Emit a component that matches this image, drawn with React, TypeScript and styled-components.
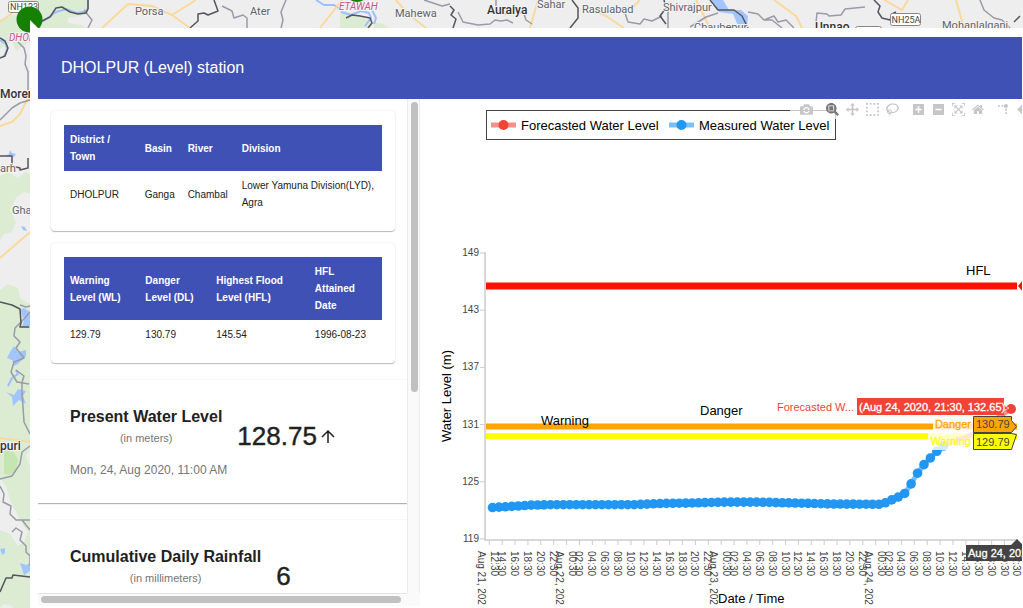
import React from "react";
import styled, { createGlobalStyle } from "styled-components";

const GlobalStyle = createGlobalStyle`
  *, *::before, *::after { box-sizing: border-box; }
  body {
    margin: 0;
    font-family: "Helvetica Neue", "Liberation Sans", Arial, sans-serif;
    color: #212121;
    background: #eeeeee;
  }
`;

const Page = styled.div`
  position: relative;
  height: 100vh;
  display: flex;
  padding: 28px 0 0 30px;
  overflow: hidden;
`;

const MapLayer = styled.svg`
  position: absolute;
  top: 0;
  left: 0;
  width: 100%;
  height: 100%;
  font-family: Roboto, sans-serif;
`;

const Dialog = styled.section`
  position: relative;
  flex: 1;
  min-width: 0;
  display: flex;
  flex-direction: column;
  padding: 9px 1px 2px 8px;
  background: #ffffff;
`;

const Header = styled.header`
  display: flex;
  align-items: center;
  height: 62px;
  flex: none;
  padding: 0 23px;
  background: #3f51b5;
`;

const HeaderTitle = styled.h1`
  margin: 0;
  font-size: 16px;
  font-weight: 400;
  line-height: 24px;
  color: #ffffff;
`;

const Body = styled.div`
  flex: 1;
  min-height: 0;
  display: grid;
  grid-template-columns: minmax(382px, 38%) minmax(0, 1fr);
`;

const SidePanel = styled.div`
  display: grid;
  min-height: 0;
  grid-template-columns: minmax(0, 1fr) 13px;
  grid-template-rows: minmax(0, 1fr) 13px;
  background: #fafafa;
`;

const PanelContent = styled.div`
  overflow: hidden;
  background: #ffffff;
`;

const VerticalTrack = styled.div`
  padding: 3px 2px 0 3px;
  border-left: 1px solid #ececec;
  border-right: 1px solid #ececec;
`;

const HorizontalTrack = styled.div`
  padding: 2px 6px 0 3px;
  border-top: 1px solid #e2e2e2;
`;

const Thumb = styled.div<{ $vertical?: boolean }>`
  width: ${(p) => (p.$vertical ? "7px" : "100%")};
  height: ${(p) => (p.$vertical ? "59%" : "7px")};
  border-radius: 4px;
  background: #c1c1c1;
`;

const Card = styled.div`
  margin: 12px 12px 0 13px;
  padding: 14px 13px;
  border-radius: 4px;
  background: #ffffff;
  box-shadow: 0 1px 1px rgba(0, 0, 0, 0.26), 0 0 2px rgba(0, 0, 0, 0.1);
`;

const DataTable = styled.table`
  width: 100%;
  table-layout: fixed;
  border-collapse: collapse;
  font-size: 10px;
  line-height: 17px;
  text-align: left;
`;

const HeadCell = styled.th`
  padding: 6px;
  background: #3f51b5;
  color: #ffffff;
  font-weight: 700;
`;

const Cell = styled.td`
  padding: 6px;
`;

const StatCard = styled.section`
  margin-top: 16px;
  padding: 27px 32px 25px;
  background: #ffffff;
  border-top: 1px solid #f6f6f6;
  box-shadow: 0 1px 1px rgba(0, 0, 0, 0.3);
`;

const StatRow = styled.div`
  display: flex;
  align-items: flex-end;
  gap: 15px;
`;

const StatHeading = styled.div`
  text-align: center;
`;

const StatTitle = styled.h2`
  margin: 0 0 3px;
  font-size: 16px;
  line-height: 20px;
  font-weight: 700;
`;

const StatUnit = styled.div`
  font-size: 11px;
  line-height: 16px;
  color: #757575;
`;

const StatValue = styled.div`
  display: flex;
  align-items: center;
  gap: 4px;
  font-size: 26px;
  line-height: 20px;
  -webkit-text-stroke: 0.4px #212121;
`;

const StatTime = styled.div`
  margin-top: 16px;
  font-size: 12px;
  line-height: 16px;
  color: #757575;
`;

const ChartArea = styled.div`
  position: relative;
  min-width: 0;
  overflow: hidden;
`;

const ChartSvg = styled.svg`
  display: block;
  width: 100%;
  height: 506px;
  overflow: hidden;
`;

const ModeBar = styled.div`
  position: absolute;
  top: 1px;
  left: 370px;
  display: flex;
  gap: 6px;
  padding: 3px 0 3px 6px;
  background: rgba(255, 255, 255, 0.7);
`;

const ModeGroup = styled.div`
  display: flex;
`;

const ModeButton = styled.button<{ $active?: boolean }>`
  display: flex;
  align-items: center;
  justify-content: center;
  min-width: 20px;
  height: 13px;
  padding: 0 3px;
  border: 0;
  background: none;
  color: ${(p) => (p.$active ? "#777777" : "#c6c6c6")};
`;

type TableData = { columns: { label: string; width: string }[]; row: string[] };

const stationTable: TableData = {
  columns: [
    { label: "District / Town", width: "23.5%" },
    { label: "Basin", width: "13.5%" },
    { label: "River", width: "17%" },
    { label: "Division", width: "46%" },
  ],
  row: ["DHOLPUR", "Ganga", "Chambal", "Lower Yamuna Division(LYD), Agra"],
};

const levelTable: TableData = {
  columns: [
    { label: "Warning Level (WL)", width: "23.7%" },
    { label: "Danger Level (DL)", width: "22.3%" },
    { label: "Highest Flood Level (HFL)", width: "31%" },
    { label: "HFL Attained Date", width: "23%" },
  ],
  row: ["129.79", "130.79", "145.54", "1996-08-23"],
};

function InfoTable({ columns, row }: TableData) {
  return (
    <Card>
      <DataTable>
        <colgroup>
          {columns.map((c) => (
            <col key={c.label} width={c.width} />
          ))}
        </colgroup>
        <thead>
          <tr>
            {columns.map((c) => (
              <HeadCell key={c.label} scope="col">
                {c.label}
              </HeadCell>
            ))}
          </tr>
        </thead>
        <tbody>
          <tr>
            {row.map((v) => (
              <Cell key={v}>{v}</Cell>
            ))}
          </tr>
        </tbody>
      </DataTable>
    </Card>
  );
}

type Icon = { label: string; width: number; d: string; scale?: number; active?: boolean };

const modeGroups: Icon[][] = [
  [
    {
      label: "Download plot",
      width: 1000,
      d: "m500 450c-83 0-150-67-150-150 0-83 67-150 150-150 83 0 150 67 150 150 0 83-67 150-150 150z m400 150h-120c-16 0-34 13-39 29l-31 93c-6 15-23 28-40 28h-340c-16 0-34-13-39-28l-31-94c-6-15-23-28-40-28h-120c-55 0-100-45-100-100v-450c0-55 45-100 100-100h800c55 0 100 45 100 100v450c0 55-45 100-100 100z m-400-550c-138 0-250 112-250 250 0 138 112 250 250 250 138 0 250-112 250-250 0-138-112-250-250-250z m365 380c-19 0-35 16-35 35 0 19 16 35 35 35 19 0 35-16 35-35 0-19-16-35-35-35z",
    },
  ],
  [
    {
      label: "Zoom",
      width: 1000,
      active: true,
      d: "m1000-25l-250 251c40 63 63 138 63 218 0 224-182 406-407 406-224 0-406-182-406-406s183-406 407-406c80 0 155 22 218 62l250-250 125 125z m-812 250l0 438 437 0 0-438-437 0z m62 375l313 0 0-312-313 0 0 312z",
    },
    {
      label: "Pan",
      width: 1000,
      d: "m1000 350l-187 188 0-125-250 0 0 250 125 0-188 187-187-187 125 0 0-250-250 0 0 125-188-188 186-187 0 125 252 0 0-250-125 0 187-188 188 188-125 0 0 250 250 0 0-126 187 188z",
    },
    {
      label: "Box Select",
      width: 1000,
      d: "m0 850l0-143 143 0 0 143-143 0z m286 0l0-143 143 0 0 143-143 0z m285 0l0-143 143 0 0 143-143 0z m286 0l0-143 143 0 0 143-143 0z m-857-286l0-143 143 0 0 143-143 0z m857 0l0-143 143 0 0 143-143 0z m-857-285l0-143 143 0 0 143-143 0z m857 0l0-143 143 0 0 143-143 0z m-857-286l0-143 143 0 0 143-143 0z m286 0l0-143 143 0 0 143-143 0z m285 0l0-143 143 0 0 143-143 0z m286 0l0-143 143 0 0 143-143 0z",
    },
    {
      label: "Lasso Select",
      width: 1031,
      d: "m1018 538c-36 207-290 336-568 286-277-48-473-256-436-463 10-57 36-108 76-151-13-66 11-137 68-183 34-28 75-41 114-42l-55-70 0 0c-2-1-3-2-4-3-10-14-8-34 5-45 14-11 34-8 45 4 1 1 2 3 2 5l0 0 113 140c16 11 31 24 45 40 4 3 6 7 8 11 48-3 100 0 151 9 278 48 473 255 436 462z m-624-379c-80 14-149 48-197 96 42 42 109 47 156 9 33-26 47-66 41-105z m-187-74c-19 16-33 37-39 60 50-32 109-55 174-68-42-25-95-24-135 8z m360 75c-34-7-69-9-102-8 8 62-16 128-68 170-73 59-175 54-244-5-9 20-16 40-20 61-28 159 121 317 333 354s407-60 434-217c28-159-121-318-333-355z",
    },
  ],
  [
    {
      label: "Zoom in",
      width: 875,
      d: "m1 787l0-875 875 0 0 875-875 0z m687-500l-187 0 0-187-125 0 0 187-188 0 0 125 188 0 0 187 125 0 0-187 187 0 0-125z",
    },
    {
      label: "Zoom out",
      width: 875,
      d: "m0 788l0-876 875 0 0 876-875 0z m688-500l-500 0 0 125 500 0 0-125z",
    },
    {
      label: "Autoscale",
      width: 1000,
      d: "m250 850l-187 0-63 0 0-62 0-188 63 0 0 188 187 0 0 62z m688 0l-188 0 0-62 188 0 0-188 62 0 0 188 0 62-62 0z m-875-938l0 188-63 0 0-188 0-62 63 0 187 0 0 62-187 0z m875 188l0-188-188 0 0-62 188 0 62 0 0 62 0 188-62 0z m-125 188l-1 0-93-94-156 156 156 156 92-93 2 0 0 250-250 0 0-2 93-92-156-156-156 156 94 92 0 2-250 0 0-250 0 0 93 93 157-156-157-156-93 94 0 0 0-250 250 0 0 0-94 93 156 157 156-157-93-93 0 0 250 0 0 250z",
    },
    {
      label: "Reset axes",
      width: 929,
      d: "m786 296v-267q0-15-11-26t-25-10h-214v214h-143v-214h-214q-15 0-25 10t-11 26v267q0 1 0 2t0 2l321 264 321-264q1-1 1-4z m124 39l-34-41q-5-5-12-6h-2q-7 0-12 3l-386 322-386-322q-7-4-13-4-7 2-12 7l-35 41q-4 5-3 13t6 12l401 334q18 15 42 15t43-15l136-114v109q0 8 5 13t13 5h107q8 0 13-5t5-13v-227l122-102q5-5 6-12t-4-13z",
    },
  ],
  [
    {
      label: "Toggle Spike Lines",
      width: 1000,
      scale: 1.5,
      d: "M512 409c0-57-46-104-103-104-57 0-104 47-104 104 0 57 47 103 104 103 57 0 103-46 103-103z m-327-39l92 0 0 92-92 0z m-185 0l92 0 0 92-92 0z m370-186l92 0 0 93-92 0z m0-184l92 0 0 92-92 0z",
    },
    {
      label: "Show closest data on hover",
      width: 1500,
      d: "m375 725l0 0-375-375 375-374 0-1 1125 0 0 750-1125 0z",
    },
  ],
];

function ModeIcon({ icon }: { icon: Icon }) {
  const s = icon.scale ?? 1;
  return (
    <svg
      width={Math.round((13 * icon.width) / 1000)}
      height={13}
      viewBox={`0 0 ${icon.width} 1000`}
      aria-hidden="true"
    >
      <path d={icon.d} fill="currentColor" transform={`matrix(${s} 0 0 ${-s} 0 850)`} />
    </svg>
  );
}

/* Plot geometry, relative to the chart area */
const PLOT = { left: 66, right: 597, top: 154, bottom: 440 };
const yOf = (v: number) => PLOT.top + ((149 - v) * (PLOT.bottom - PLOT.top)) / 30;
const hourWidth = 6.44;
const tickX = (k: number) => 69.3 + k * hourWidth * 2;

const profile: [number, number][] = [
  [0, 122.3], [1, 122.34], [3, 122.42], [6, 122.55], [9, 122.6], [22, 122.6],
  [26, 122.72], [31, 122.78], [36, 122.87], [41, 122.87], [47, 122.77],
  [53, 122.67], [60, 122.64], [61, 122.8], [62, 123.1], [63, 123.4],
  [64, 123.78], [65, 124.78], [66, 125.9], [67, 126.8], [68, 127.5],
  [69, 128.2], [70, 128.75],
];

function levelAt(hour: number) {
  const i = Math.max(1, profile.findIndex(([h]) => h >= hour));
  const [h0, v0] = profile[i - 1];
  const [h1, v1] = profile[i];
  return v0 + ((v1 - v0) * (hour - h0)) / (h1 - h0);
}

const measured = Array.from({ length: 71 }, (_, h) => ({ x: 72.5 + h * hourWidth, y: yOf(levelAt(h)) }));
const forecast = [
  { x: 523, y: yOf(128.75) },
  { x: 553, y: yOf(130) },
  { x: 591, y: 310 },
];
const lastForecast = forecast[forecast.length - 1];
const toPoints = (pts: { x: number; y: number }[]) => pts.map((p) => `${p.x},${p.y}`).join(" ");

const dayLabels: Record<number, string> = {
  0: "Aug 21, 2020",
  6: "Aug 22, 2020",
  18: "Aug 23, 2020",
  30: "Aug 24, 2020",
};
const timeLabel = (k: number) => `${String((12 + k * 2) % 24).padStart(2, "0")}:30`;

function LevelChart() {
  return (
    <ChartSvg role="img" aria-label="Water level over time">
      <g stroke="#cccccc" fill="none">
        <path d={`M65 ${PLOT.top - 1}V441H598`} strokeWidth="1.5" />
        {[149, 143, 137, 131, 125, 119].map((v) => (
          <path key={v} d={`M60 ${yOf(v)}h5`} />
        ))}
        {Array.from({ length: 42 }, (_, k) => (
          <path key={k} d={`M${tickX(k)} 441v5`} />
        ))}
      </g>
      <g fontSize="10" fill="#444444">
        {[149, 143, 137, 131, 125, 119].map((v) => (
          <text key={v} x="59" y={yOf(v) + 3} textAnchor="end">
            {v}
          </text>
        ))}
        {Array.from({ length: 42 }, (_, k) => {
          const day = dayLabels[k];
          return (
            <g key={k} transform={`translate(${tickX(k)} 452) rotate(90)`}>
              <text y={day ? -2 : 4}>{timeLabel(k)}</text>
              {day && <text y="11">{day}</text>}
            </g>
          );
        })}
      </g>

      <g strokeWidth="6" fill="none">
        <path d={`M${PLOT.left} ${yOf(145.54)}H${PLOT.right}`} stroke="#ff1100" strokeWidth="7" />
        <path d={`M${PLOT.left} ${yOf(130.79)}H${PLOT.right}`} stroke="#ffa500" />
        <path d={`M${PLOT.left} ${yOf(129.79)}H${PLOT.right}`} stroke="#ffff00" />
      </g>
      <path d="M598 187l6 -7v14z" fill="#ff1100" />

      <polyline points={toPoints(forecast)} fill="none" stroke="#f44336" strokeOpacity="0.6" strokeWidth="5" />
      <polyline points={toPoints(measured)} fill="none" stroke="#2196f3" strokeOpacity="0.6" strokeWidth="5" />
      {measured.map((p) => (
        <circle key={p.x} cx={p.x} cy={p.y} r="4.8" fill="#2196f3" />
      ))}

      <g fontSize="13" fill="#000000">
        <text x="546" y="176">HFL</text>
        <text x="280" y="316">Danger</text>
        <text x="121" y="326">Warning</text>
        <text x="298" y="504">Date / Time</text>
        <text transform="translate(31 297) rotate(-90)" textAnchor="middle">
          Water Level (m)
        </text>
      </g>

      <rect x="66.500" y="11.500" width="349" height="29" fill="#ffffff" stroke="#444444" />
      <g strokeWidth="5">
        <path d="M71 26h25" stroke="#f44336" strokeOpacity="0.6" />
        <circle cx="83.500" cy="26" r="5" fill="#f44336" />
        <path d="M249 26h25" stroke="#2196f3" strokeOpacity="0.6" />
        <circle cx="261.500" cy="26" r="5" fill="#2196f3" />
      </g>
      <g fontSize="13" fill="#000000">
        <text x="101" y="31">Forecasted Water Level</text>
        <text x="279" y="31">Measured Water Level</text>
      </g>

      <g fontSize="11">
        <rect x="513" y="317" width="40" height="17" fill="#ffffff" fillOpacity="0.8" />
        <rect x="508" y="334" width="45" height="17" fill="#ffffff" fillOpacity="0.8" />
        <path d="M437 299h147v7l5 3l-5 2v5h-147z" fill="#f44336" />
        <circle cx={lastForecast.x} cy={lastForecast.y} r="5" fill="#f44336" />
        <path d="M584 303l1 4l4 2l-4 2" fill="none" stroke="#ffffff" strokeOpacity="0.7" />
        <path d="M553.500 317.500h38v4l5 6l-5 6h-38z" fill="#ffa500" stroke="#444444" />
        <path d="M553.500 334.500h38l5 1l-5 15h-38z" fill="#ffff00" stroke="#444444" />
        <text x="434" y="312" textAnchor="end" fill="#f44336">Forecasted W...</text>
        <text x="439" y="312" fill="#ffffff" stroke="#ffffff" strokeWidth="0.3">
          (Aug 24, 2020, 21:30, 132.65)
        </text>
        <text x="551" y="329" textAnchor="end" fill="#ffa500" stroke="#ffa500" strokeWidth="0.3">Danger</text>
        <text x="551" y="346" textAnchor="end" fill="#ffff00" stroke="#ffff00" strokeWidth="0.3">Warning</text>
        <text x="556" y="329" fill="#444444">130.79</text>
        <text x="556" y="347" fill="#444444">129.79</text>
        <path d="M546 446h45l6 -6l6 6h51v16h-108z" fill="#444444" />
        <text x="548" y="458" fill="#ffffff" stroke="#ffffff" strokeWidth="0.3">
          Aug 24, 2020, 21:30
        </text>
      </g>
    </ChartSvg>
  );
}

function MapBackground() {
  return (
    <MapLayer aria-hidden="true">
      <rect width="100%" height="100%" fill="#eeeeee" />
      <g fill="#dcecd3">
        <path d="M0 20l8-4 10-2 6-14h64v13l-8 3-12 2 0 5 14 2 6 4H30v12l-6 4-8 6-4-10-12 8z" />
        <path d="M340 10l8 2 8 4 14 4 2 6-4 2h-28zM374 22l10 2 4 4h-14z" />
        <path d="M0 176l8-4 10 6 8-6 4 2v20l-6-2-8 6-6 12 6 12-4 10-8 2-4 6z" />
        <path d="M0 290l8-6 10 4 2 10 10 6v146l-4 6 4 10v146l-8 8-10-14-8-2-4 4z" />
      </g>
      <path d="M0 478l6 8 4 14 10 20 8 12-4 10-6 4-8-12-10-4z" fill="#eeeeee" />
      <path d="M4 450l10 2 4 8-2 10-6 5-6-1z" fill="#c5e6b0" />
      <g fill="#a3c5ff">
        <path d="M5 156l4-2 1-4 2 3 4 1-2 3z" />
        <path d="M21 226l4 1 2 4-4-1z" />
        <path d="M20 310l4-2 6 4v16l-8 0 2-8z" />
        <path d="M10 352l4-6 4 6 8-2 0 6-8 8-4 2-2-6-5-2z" />
        <path d="M6 392l8 3 4-6 8 2-3 5 3 8-7-4-6 6-1-9z" />
        <path d="M0 549l5-1 0 5-3 2zM20 563l6 2 4-2 0 8-6 4z" />
        <path d="M711 0h12l6 10 12 0 7 6-1 12h-8l-6-14-14-2z" />
      </g>
      <g fill="none" stroke="#9cc0ff" strokeWidth="2" strokeLinejoin="round">
        <path d="M42 22l14-10 10-3 10 4 9-1 3-4V0" />
        <path d="M341 12l10 3 10-4 8 2 2 5-6 8M372 10l4 8-2 6" />
        <path d="M316 0l8 5 10 0 6 4" />
        <path d="M0 40l6 4 1 6-3 6M8 386l4-8 6-4-2-4" />
      </g>
      <g fill="none" stroke="#fad99a" strokeWidth="2" strokeLinejoin="round">
        <path d="M0 22l22-16M102 28l26-24 24 2 20 9 18 13M172 15l24-15M320 28l22-28M396 0l12 14 18 14" />
        <path d="M530 28l8-28M594 10l12 6 18 12M626 8l8-2 6-6M696 0l6 12 8 16M774 0l22 16 6 12M884 0l18 10 6-10M956 0l8 28" />
        <path d="M30 94l-10 20-8 8-12 4M0 258l30-26M0 438l30 4" />
      </g>
      <g fill="none" stroke="#9a9aa8" strokeWidth="1.500" strokeLinejoin="round">
        <path d="M84 10l8 10-4 8M222 6l10 5 2 7 9-3 4 3v10M286 0l-5 12 2 8-2 8M424 0l18 6 8-2" />
        <path d="M458 12l5 10 15 3 12-1 5-4 6 1 6-1 6 3M496 0v12l12 2 6-4 10 4 2 6 6 4M624 10l4 12 12 2 4-5 8 2 10-5M668 4v24" />
        <path d="M690 27l16-10 12-4M748 12l10 2 6 6 8 0 10 8M764 20l10-4 4 6 8-2 8 8M816 22l1-9 10 1 2 2 12-1 4-6 20-2M980 0l4 10 10 8 8 2 8 8" />
        <path d="M18 42l6 6 2 8-1 8 3 8v20M0 120l12-12 8-5 10-3M20 305l6 2 4-1M30 312l-5 6-10 10-1 8 6 6-4 6 8 10-10 4-3 10 6 10 12 2M16 370l8 6-2 6 0 10 2 30 6 12" />
        <path d="M30 446l-8 6-2 12-8 12-12 3M0 486l4 8-1 8 8 4-1 8 6 6 6 0 8 10M30 520H16M12 532l4-4 6 4-2 8 6 6 0 6 4 4v10" />
      </g>
      <g fill="none" stroke="#55555a" strokeWidth="1.500" strokeLinejoin="round">
        <path d="M42 21l8-4 6-9 6-1 8 5 8 2 8-1 2-4V0M0 58l5-2 3-8-3-7-5-3M190 28l8-7 0-7 6-1 4 2 10-4-4-11" />
        <path d="M346 18l6-3 8 1 10 2 2 5-4 5M450 6l4 4-3 5 5 4-3 9M572 0l6 8 0 10-8 10M710 0l8 10 16 0 8 6 6 12" />
        <path d="M874 0l6 6-2 6 4 6 8 2 2-6 4-2M1014 22l6-6M664 0l2 8-6 8 6 8M0 156l12 0 0 10 8 2 0 2 8-2 0-10M0 302l12 3 8 4 1 14-1 4 9 0" />
        <path d="M0 592l6-14 6 0 1-3 17 2" />
      </g>
      <g fill="#5f6368" fontSize="11" stroke="#f4f4f4" strokeWidth="2" paintOrder="stroke">
        <text x="135" y="15">Porsa</text>
        <text x="250" y="15">Ater</text>
        <text x="395" y="17">Mahewa</text>
        <text x="537" y="8">Sahar</text>
        <text x="582" y="13">Rasulabad</text>
        <text x="663" y="11">Shivrajpur</text>
        <text x="694" y="31">Chaubepur</text>
        <text x="942" y="29">Mohanlalganj</text>
        <text x="0" y="172">arh</text>
        <text x="12" y="214">Gha</text>
      </g>
      <g fill="#333333" fontSize="12" fontWeight="500" stroke="#f4f4f4" strokeWidth="2" paintOrder="stroke">
        <text x="487" y="14">Auraiya</text>
        <text x="815" y="31">Unnao</text>
        <text x="0" y="98">Morena</text>
        <text x="0" y="450">puri</text>
      </g>
      <g fill="#c8528c" fontSize="10" fontStyle="italic" stroke="#f4f4f4" strokeWidth="2" paintOrder="stroke">
        <text x="9" y="41">DHOLPUR</text>
        <text x="339" y="10">ETAWAH</text>
      </g>
      <g fontSize="9" textAnchor="middle">
        <rect x="8.500" y="1.500" width="30" height="11" rx="2" fill="#ffffff" stroke="#888888" />
        <text x="24" y="10" fill="#444444">NH123</text>
        <rect x="890.500" y="13.500" width="30" height="12" rx="2" fill="#ffffff" stroke="#888888" />
        <text x="906" y="23" fill="#444444">NH25A</text>
        <rect x="855.500" y="26.500" width="26" height="10" rx="2" fill="#ffffff" stroke="#888888" />
      </g>
      <circle cx="29.500" cy="19.500" r="13" fill="#168000" />
      <circle cx="357" cy="-10" r="12" fill="#168000" />
      <path d="M30 20v9h9z" fill="#ffffff" />
    </MapLayer>
  );
}

export default function App() {
  return (
    <Page>
      <GlobalStyle />
      <MapBackground />
      <Dialog>
        <Header>
          <HeaderTitle>DHOLPUR (Level) station</HeaderTitle>
        </Header>
        <Body>
          <SidePanel>
            <PanelContent>
              <InfoTable {...stationTable} />
              <InfoTable {...levelTable} />
              <StatCard>
                <StatRow>
                  <StatHeading>
                    <StatTitle>Present Water Level</StatTitle>
                    <StatUnit>(in meters)</StatUnit>
                  </StatHeading>
                  <StatValue>
                    128.75
                    <svg width="14" height="14" viewBox="0 0 14 14" fill="none" stroke="#212121" strokeWidth="1.500" aria-hidden="true">
                      <path d="M7 14V2M1 8l6-6 6 6" />
                    </svg>
                  </StatValue>
                </StatRow>
                <StatTime>Mon, 24, Aug 2020, 11:00 AM</StatTime>
              </StatCard>
              <StatCard>
                <StatRow>
                  <StatHeading>
                    <StatTitle>Cumulative Daily Rainfall</StatTitle>
                    <StatUnit>(in millimeters)</StatUnit>
                  </StatHeading>
                  <StatValue>6</StatValue>
                </StatRow>
              </StatCard>
            </PanelContent>
            <VerticalTrack>
              <Thumb $vertical />
            </VerticalTrack>
            <HorizontalTrack>
              <Thumb />
            </HorizontalTrack>
          </SidePanel>
          <ChartArea>
            <LevelChart />
            <ModeBar>
              {modeGroups.map((group) => (
                <ModeGroup key={group[0].label}>
                  {group.map((icon) => (
                    <ModeButton key={icon.label} type="button" aria-label={icon.label} $active={icon.active}>
                      <ModeIcon icon={icon} />
                    </ModeButton>
                  ))}
                </ModeGroup>
              ))}
            </ModeBar>
          </ChartArea>
        </Body>
      </Dialog>
    </Page>
  );
}
